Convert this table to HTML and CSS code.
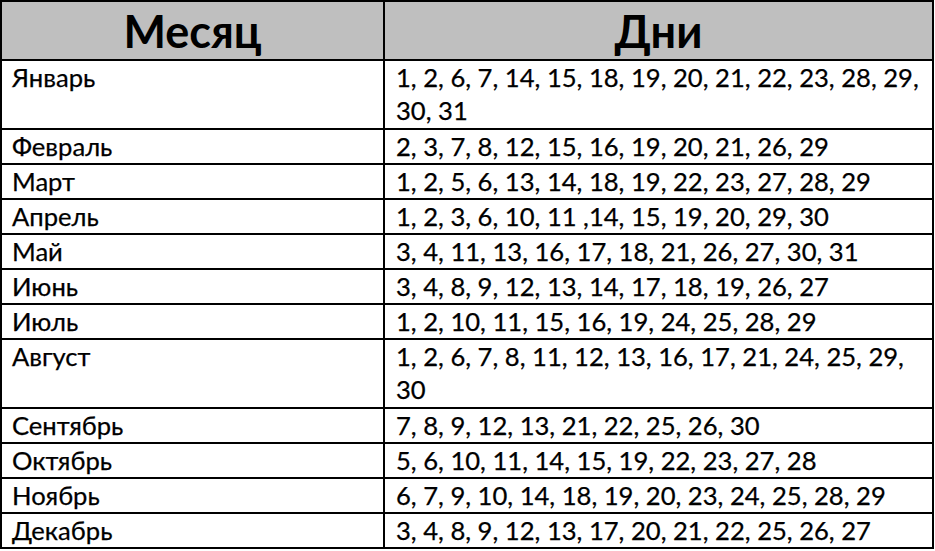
FILE: index.html
```html
<!DOCTYPE html>
<html lang="ru">
<head>
<meta charset="utf-8">
<link rel="stylesheet" href="styles.css">
</head>
<body>
<table class="days">
  <thead>
    <tr><th class="c-month">Месяц</th><th class="c-days">Дни</th></tr>
  </thead>
  <tbody>
    <tr class="two"><td>Январь</td><td>1, 2, 6, 7, 14, 15, 18, 19, 20, 21, 22, 23, 28, 29, 30, 31</td></tr>
    <tr><td>Февраль</td><td>2, 3, 7, 8, 12, 15, 16, 19, 20, 21, 26, 29</td></tr>
    <tr><td>Март</td><td>1, 2, 5, 6, 13, 14, 18, 19, 22, 23, 27, 28, 29</td></tr>
    <tr><td>Апрель</td><td>1, 2, 3, 6, 10, 11 ,14, 15, 19, 20, 29, 30</td></tr>
    <tr><td>Май</td><td>3, 4, 11, 13, 16, 17, 18, 21, 26, 27, 30, 31</td></tr>
    <tr><td>Июнь</td><td>3, 4, 8, 9, 12, 13, 14, 17, 18, 19, 26, 27</td></tr>
    <tr><td>Июль</td><td>1, 2, 10, 11, 15, 16, 19, 24, 25, 28, 29</td></tr>
    <tr class="two"><td>Август</td><td>1, 2, 6, 7, 8, 11, 12, 13, 16, 17, 21, 24, 25, 29, 30</td></tr>
    <tr><td>Сентябрь</td><td>7, 8, 9, 12, 13, 21, 22, 25, 26, 30</td></tr>
    <tr><td>Октябрь</td><td>5, 6, 10, 11, 14, 15, 19, 22, 23, 27, 28</td></tr>
    <tr><td>Ноябрь</td><td>6, 7, 9, 10, 14, 18, 19, 20, 23, 24, 25, 28, 29</td></tr>
    <tr><td>Декабрь</td><td>3, 4, 8, 9, 12, 13, 17, 20, 21, 22, 25, 26, 27</td></tr>
  </tbody>
</table>
</body>
</html>
```
FILE: styles.css
```css
html, body {
  margin: 0;
  padding: 0;
  background: #fff;
}
.days {
  border-collapse: collapse;
  width: 934px;
  table-layout: fixed;
  font-family: Lato, "Open Sans", "Noto Sans", sans-serif;
  color: #000;
}
.days th, .days td {
  border: 2px solid #000;
  vertical-align: top;
  text-align: left;
}
.days th {
  background: #bfbfbf;
  height: 57px;
  padding: 0;
  font-size: 45px;
  font-weight: 700;
  text-align: center;
  vertical-align: middle;
  line-height: 56px;
}
.c-month { width: 381px; }
.days td {
  font-size: 25.6px;
  line-height: 33px;
  padding: 0 3px 0 11px;
  -webkit-text-stroke: 0.25px #000;
}
.days td:first-child {
  padding-left: 10px;
}
.days tr.two td {
  padding-bottom: 1px;
}
```
